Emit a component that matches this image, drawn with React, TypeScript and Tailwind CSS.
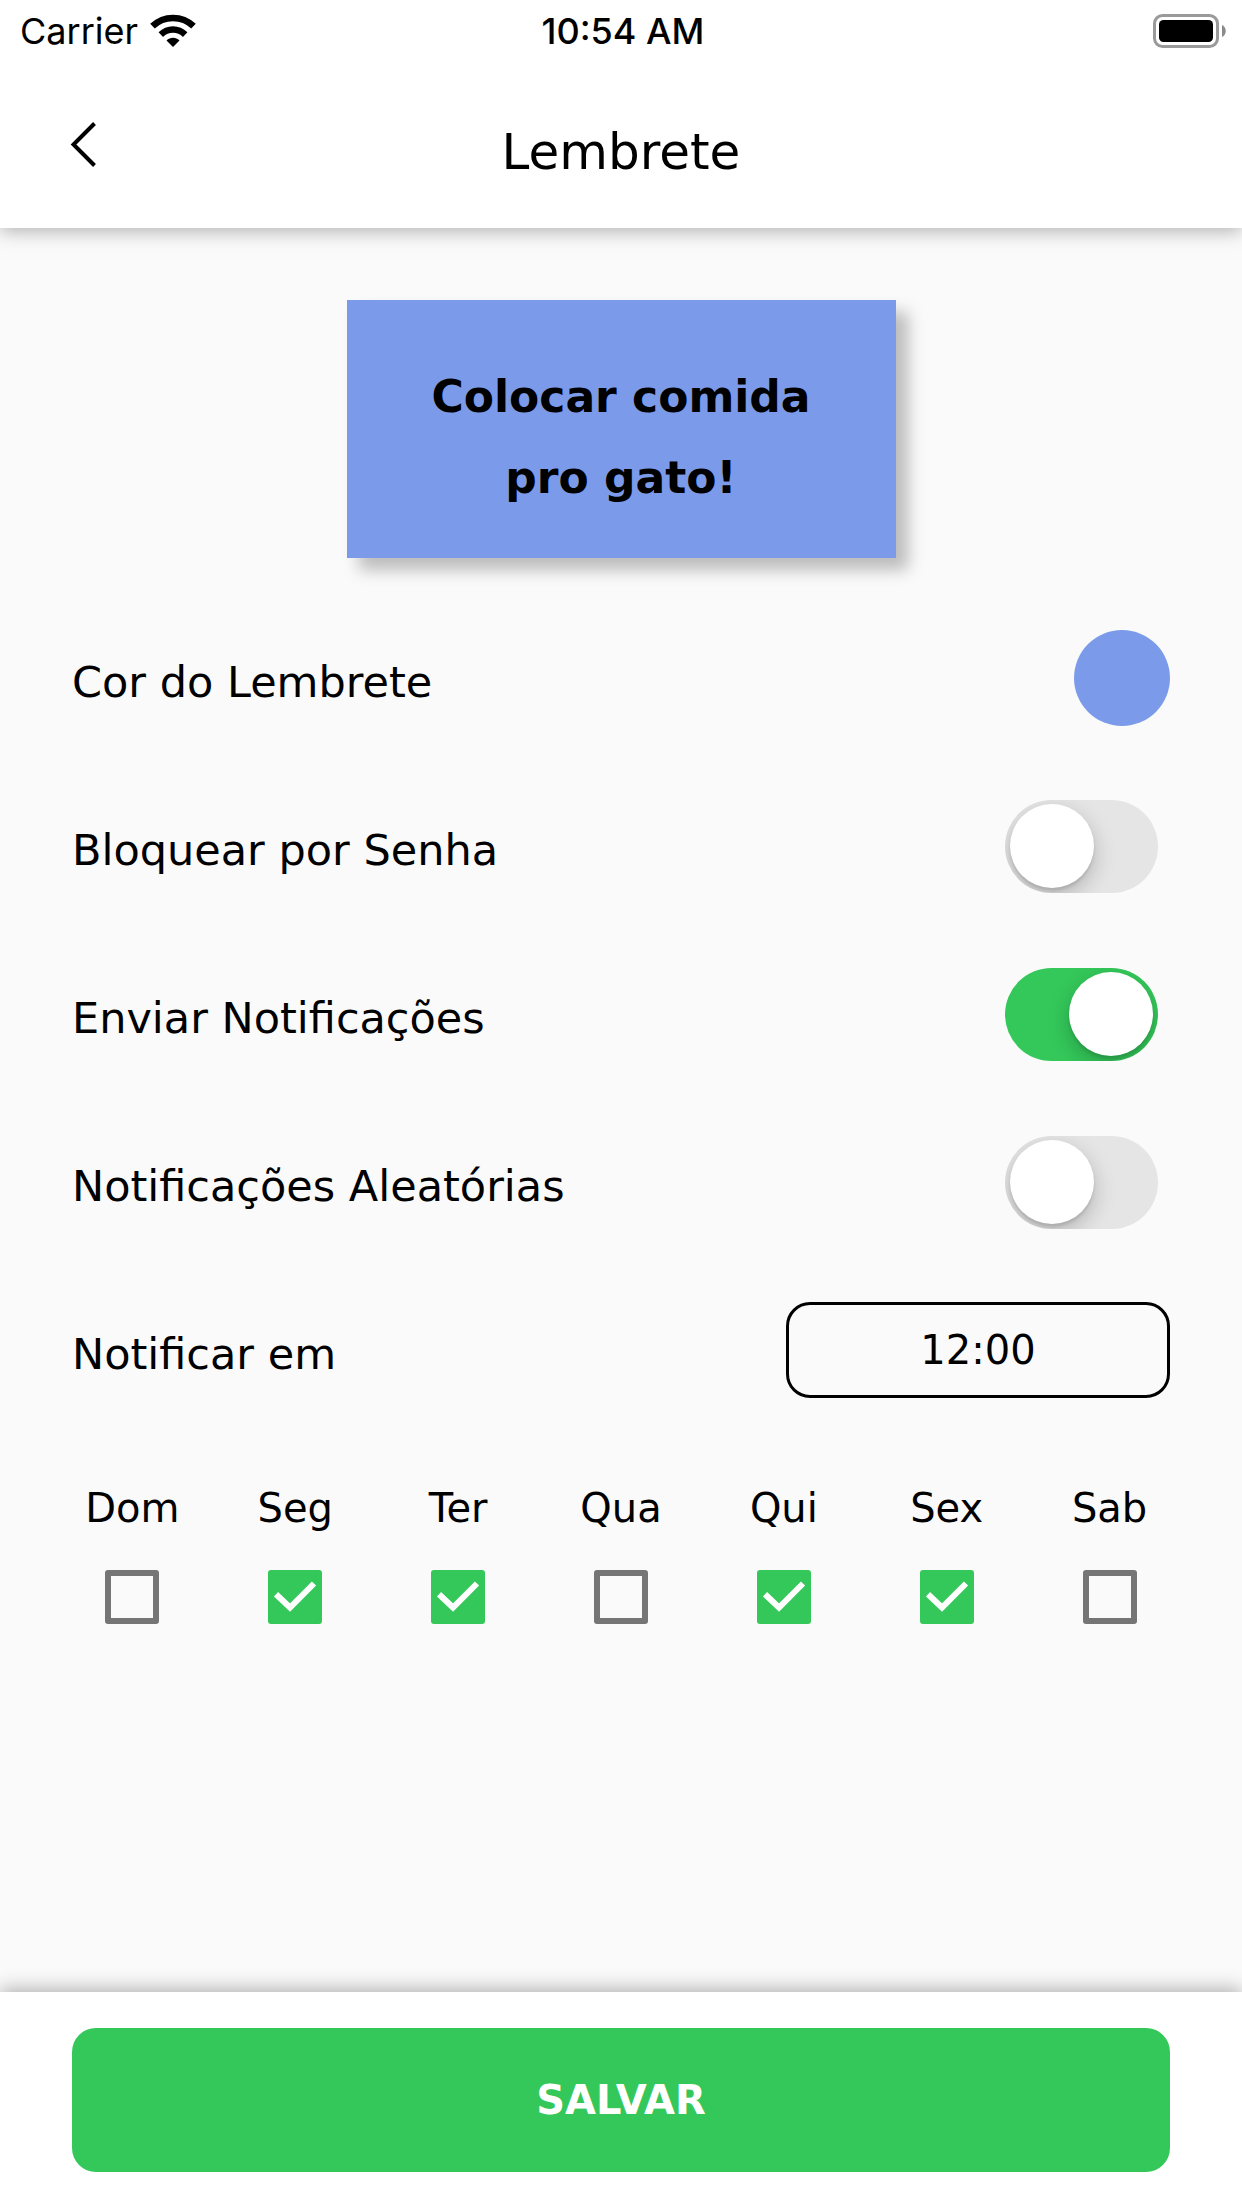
import { useState } from "react";

type SwitchRow = { id: string; label: string; initial: boolean };

const switches: SwitchRow[] = [
  { id: "bloquear", label: "Bloquear por Senha", initial: false },
  { id: "enviar", label: "Enviar Notificações", initial: true },
  { id: "aleatorias", label: "Notificações Aleatórias", initial: false },
];

const days = [
  { name: "Dom", initial: false },
  { name: "Seg", initial: true },
  { name: "Ter", initial: true },
  { name: "Qua", initial: false },
  { name: "Qui", initial: true },
  { name: "Sex", initial: true },
  { name: "Sab", initial: false },
];

function StatusBar() {
  return (
    <div className="grid h-[60px] grid-cols-3 items-center bg-white pt-0.5 pr-4 pl-5 font-['Inter',sans-serif] text-[36px]">
      <div className="flex items-center gap-3">
        <span>Carrier</span>
        <svg className="h-[34px] w-[46px]" viewBox="0 0 46 34" fill="none" stroke="#000" aria-label="Wi-Fi">
          <path d="M2.500 12.200C14 1.200 32 1.200 43.500 12.200" strokeWidth="6.600" />
          <path d="M10.800 20.600C17.700 13.800 28.300 13.800 35.200 20.600" strokeWidth="6.400" />
          <path d="M16.500 26.500C20.100 22.800 25.900 22.800 29.500 26.500L23 33Z" fill="#000" stroke="none" />
        </svg>
      </div>
      <div className="text-center font-medium">10:54 AM</div>
      <svg className="h-[34px] w-[74px] justify-self-end" viewBox="0 0 74 34" aria-label="Bateria">
        <rect x="2.500" y="1.500" width="63" height="31" rx="8" fill="none" stroke="#9a9a9a" strokeWidth="3" />
        <rect x="7" y="6" width="54" height="22" rx="4.500" />
        <path d="M70 11C75 13 75 21 70 23Z" fill="#8a8a8a" />
      </svg>
    </div>
  );
}

function Switch({ id, label, initial }: SwitchRow) {
  const [on, setOn] = useState(initial);
  return (
    <div className="flex h-24 items-center justify-between">
      <label htmlFor={id} className="pt-2 text-[43px]">
        {label}
      </label>
      <input
        id={id}
        type="checkbox"
        role="switch"
        checked={on}
        onChange={(e) => setOn(e.target.checked)}
        className="mr-3 flex h-[93px] w-[153px] shrink-0 appearance-none items-center overflow-hidden rounded-full bg-[#e5e5e5] px-[5px] before:block before:size-[84px] before:rounded-full before:bg-white before:shadow-[0_8px_22px_rgba(0,0,0,0.22),0_3px_3px_rgba(0,0,0,0.1)] before:content-[''] checked:justify-end checked:bg-[#34c85a]"
      />
    </div>
  );
}

function Day({ name, initial }: { name: string; initial: boolean }) {
  const [on, setOn] = useState(initial);
  return (
    <label className="flex flex-col items-center gap-8">
      <span className="text-[40px] leading-[60px]">{name}</span>
      <span className="grid size-[54px]">
        <input
          type="checkbox"
          checked={on}
          onChange={(e) => setOn(e.target.checked)}
          className="col-start-1 row-start-1 size-[54px] appearance-none rounded-[3px] border-6 border-[#757575] checked:border-[#34c85a] checked:bg-[#34c85a]"
        />
        {on && (
          <svg className="pointer-events-none col-start-1 row-start-1 size-[54px]" viewBox="0 0 54 54" fill="none" aria-hidden="true">
            <path d="M8 24.300L22 37.500L46 13.500" stroke="#fff" strokeWidth="6" />
          </svg>
        )}
      </span>
    </label>
  );
}

export default function App() {
  const [time, setTime] = useState("12:00");
  return (
    <div className="flex min-h-screen flex-col bg-[#fafafa] font-['DejaVu_Sans',sans-serif] text-black">
      <header className="bg-white shadow-[0_3px_18px_rgba(0,0,0,0.3)]">
        <StatusBar />
        <div className="grid h-[168px] grid-cols-[48px_1fr_48px] items-center px-[60px]">
          <button type="button" aria-label="Voltar" className="flex size-12 items-center justify-center">
            <svg className="size-12" viewBox="0 0 48 48" fill="none" aria-hidden="true">
              <path d="M34.500 3.500L13.500 24.500L34.500 45.500" stroke="#000" strokeWidth="4" />
            </svg>
          </button>
          <h1 className="pt-4 text-center text-[50px] leading-[60px]">Lembrete</h1>
        </div>
      </header>

      <main className="flex flex-1 flex-col gap-[72px] px-[72px] py-[72px]">
        <div className="w-1/2 self-center bg-[#7b9bea] px-9 pt-14 pb-10 text-center text-[44px] leading-[81px] font-bold shadow-[12px_12px_15px_rgba(0,0,0,0.25)]">
          Colocar comida
          <br />
          pro gato!
        </div>

        <div className="flex h-24 items-center justify-between">
          <span id="cor" className="pt-2 text-[43px]">
            Cor do Lembrete
          </span>
          <button type="button" aria-labelledby="cor" className="size-24 rounded-full bg-[#7b9bea]" />
        </div>

        {switches.map((row) => (
          <Switch key={row.id} {...row} />
        ))}

        <div className="flex h-24 items-center justify-between">
          <label htmlFor="hora" className="pt-2 text-[43px]">
            Notificar em
          </label>
          <input
            id="hora"
            type="text"
            value={time}
            onChange={(e) => setTime(e.target.value)}
            className="h-24 w-96 rounded-3xl border-3 border-black bg-transparent text-center text-[40px]"
          />
        </div>

        <div className="-mx-[21px] grid grid-cols-7 pt-2">
          {days.map((day) => (
            <Day key={day.name} {...day} />
          ))}
        </div>
      </main>

      <footer className="bg-white px-[72px] py-9 shadow-[0_-3px_18px_rgba(0,0,0,0.3)]">
        <button type="button" className="h-36 w-full rounded-3xl bg-[#34c85a] text-[40px] font-bold text-white">
          SALVAR
        </button>
      </footer>
    </div>
  );
}
